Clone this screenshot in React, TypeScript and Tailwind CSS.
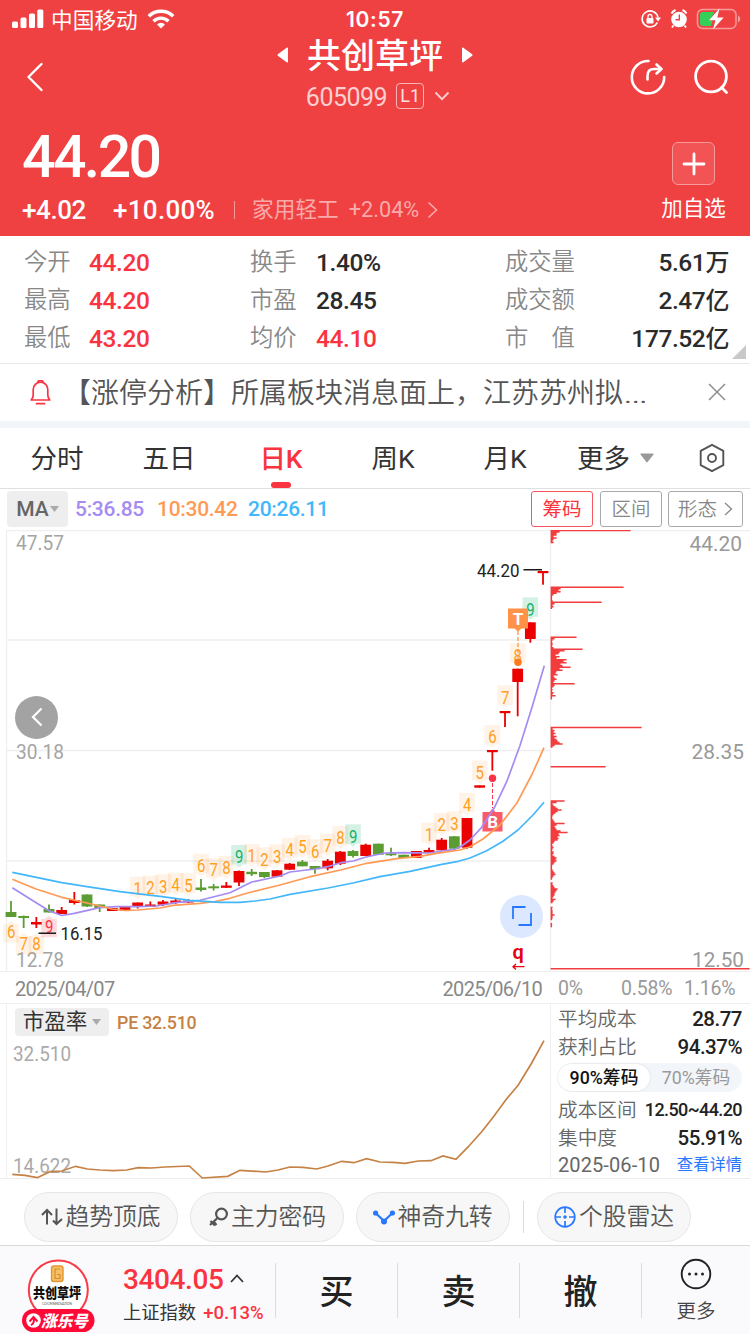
import { useState, type ReactNode } from 'react'
import clsx from 'clsx'

const RED = '#eb0000'
const GREEN = '#5c9d33'

type Candle = {
  high: number
  top: number
  bottom: number
  low: number
  up: boolean
}

function c(high: number, top: number, bottom: number, low: number, up: boolean): Candle {
  return { high, top, bottom, low, up }
}

const candles: Candle[] = [
  c(901, 912, 917, 917, false),
  c(915.5, 916, 918, 928, false),
  c(917, 922, 924.5, 928, true),
  c(904.5, 909, 912.5, 912.5, false),
  c(907, 910, 914, 914, true),
  c(892, 900, 903, 904.5, true),
  c(894.5, 894.5, 906.5, 907, false),
  c(904.5, 904.5, 908, 912, false),
  c(908, 908, 911, 911, true),
  c(907, 907, 910.5, 910.5, true),
  c(902.5, 902.5, 907, 908.5, true),
  c(901.5, 904.5, 907, 907, true),
  c(900, 901.5, 904.7, 906, true),
  c(898.5, 900.5, 902.8, 904, true),
  c(899, 900.5, 902.5, 903, true),
  c(879, 887.5, 890, 891.5, false),
  c(884, 886.3, 888.3, 890.5, false),
  c(882, 885.5, 887.8, 888, true),
  c(870.5, 871, 882.5, 886, true),
  c(869, 871.8, 874.2, 876, false),
  c(872, 872, 877, 878, false),
  c(870, 870.3, 876.7, 876.7, true),
  c(863, 863.7, 869.7, 870, true),
  c(860, 861.7, 866.3, 866.3, false),
  c(866, 866, 869.3, 873.7, false),
  c(859, 860.7, 868.3, 870.3, true),
  c(851, 851.7, 863.7, 865, true),
  c(850, 851, 856, 857.5, false),
  c(843.7, 844.7, 856, 856, true),
  c(843.7, 843.7, 854.7, 854.7, false),
  c(847.7, 853.3, 855.3, 856, false),
  c(854.7, 854.7, 858, 858, false),
  c(851, 851, 858, 858, true),
  c(847.7, 850, 852.7, 852.7, true),
  c(838, 839.7, 850.3, 850.3, true),
  c(836, 836.3, 848.7, 848.7, false),
  c(818, 818, 847.7, 848.7, true),
  c(785.3, 785.3, 787.7, 787.7, true),
  c(750, 750, 752.2, 770.7, true),
  c(711, 711, 713.2, 727, true),
  c(668.7, 668.7, 682, 716.3, true),
  c(622.3, 622.3, 639, 642.7, true),
  c(571, 571, 573.2, 584.7, true),
]

// [candle index, digit, centre y]
const turnAbove: [number, number, number][] = [
  [10, 1, 888.7], [11, 2, 887.7], [12, 3, 886.3], [13, 4, 884.7], [14, 5, 885.3],
  [15, 6, 865.7], [16, 7, 870], [17, 8, 868], [18, 9, 857], [19, 1, 856],
  [20, 2, 859.3], [21, 3, 856.3], [22, 4, 850], [23, 5, 847], [24, 6, 851.3],
  [25, 7, 845.7], [26, 8, 838], [27, 9, 836.3], [33, 1, 834.7], [34, 2, 825],
  [35, 3, 823.3], [36, 4, 805], [37, 5, 772.7], [38, 6, 737], [39, 7, 697.3],
  [40, 8, 655.3], [41, 9, 609.3],
]

const turnBelow: [number, number, number][] = [
  [0, 6, 932], [1, 7, 944], [2, 8, 944], [3, 9, 926.7],
]

const ma5 =
  '12.3,887.7 25,895.7 49,910.7 61.7,915.5 74.3,913.3 99.7,907.7 116.7,906.7 137.7,906.7 156.7,906 175.7,902.7 200,900.3 230,892.7 251.7,882 280,876 290,872 315,869 327.7,866.7 340.7,862.7 353.3,861 366,857 385,853 403,852.7 430,853 442,851 454.7,849.3 461.7,846 470,840 481.7,827.3 494,808.3 506.7,781.7 520,745.5 531.7,708.3 544.3,665.7'
const ma10 =
  '12.3,879.3 36,889 61.7,897.3 87,903 99.7,906 112,909 125,910.5 137.7,910 160,908 173,905.3 200,903.3 215,901.5 230,898.3 246.7,893.3 280,885 290,882.3 310,876.7 340.7,870 366.7,863.3 396.7,858.7 420,856.3 436.7,853.3 460,850 470,846.7 483,839 500,825 516.7,803.3 531.7,775 544,747.7'
const ma20 =
  '12.3,872.3 61.7,882.7 87,886.7 120,891.7 160,896.3 190,900.3 220,902.3 240,902.3 255,901 270,899 290,894.3 328,888 353,883 380,876.7 410,871.3 441.7,864.3 458.3,861.3 470,858 486.7,850.7 503,841.3 518,830 533,815 544,802.3'
const pe =
  '12.3,1174.3 25,1175.3 37.3,1177.7 50,1171.7 61.7,1171 75.7,1166.3 87.3,1169 100,1170 113.3,1170.7 126.7,1170 138.3,1167.7 151.7,1168 165,1167 189.3,1166 202.3,1178 227.7,1176.3 240,1170.3 265.7,1172 278,1170 290,1167 303,1167.3 316.7,1169 328,1166 341.7,1161.3 354,1162.7 366.7,1158.7 380,1162 393,1162.3 405,1163.3 418.3,1161 431,1160.7 443,1156 456,1159.3 468.3,1146.7 481.7,1131.7 493.3,1117 506.3,1099.3 518.3,1085 531.7,1063 544,1040.7'

// chip distribution: start y and one bar length per 1.5px
const chipGroups: [number, number[]][] = [
  [530.5, [80, 9, 6, 6, 3, 6, 3, 2, 3]],
  [587.2, [73, 10, 8, 10, 6, 3, 1.5, 1.5, 1.5, 2, 51, 4, 2, 3, 1.5]],
  [637.3, [26, 4, 2, 1.5, 2, 2, 1.5, 3, 32, 14, 9, 8, 5, 9, 6, 16, 13, 16, 10, 12, 20, 9, 12, 6, 5, 7, 3, 4, 6, 4, 3, 24, 4, 3, 1.5, 2, 1.5, 3, 2, 5, 1.5, 1.5]],
  [727.5, [91, 2, 4, 3, 5, 3, 6, 4, 6, 7, 9, 12, 4, 2]],
  [766.6, [55]],
  [801, [14, 6, 2, 3, 5, 7, 11, 7, 5, 3, 2, 1.5, 2, 3, 4, 14, 6, 4, 5, 6, 10, 17, 8, 9, 7, 8, 7, 4, 3, 1.5, 2, 3, 2, 1.5, 3, 3, 2, 4, 6, 5, 6, 4, 3, 1.5, 1.5, 1.5, 2, 3, 4, 5, 3, 2, 1.5]],
  [883, [2, 2, 3, 4, 7, 6, 5, 4, 4, 3, 2, 5, 3, 2]],
  [907.5, [2, 1.5, 2, 2, 2, 4, 2, 2, 1.5]],
  [923.5, [1.5, 1.5, 1.5]],
  [968.8, [199]],
]

const CHIP_X = 550.6

function chipPath(y0: number, bars: number[]) {
  const steps = bars.map((len) => `H${CHIP_X + len}v1.5`).join('')
  return `M${CHIP_X} ${y0 - 0.7}${steps}H${CHIP_X}z`
}

const candleX = (i: number) => 11 + i * 12.667

function Label({
  x,
  y,
  w,
  size = 20,
  fill = '#999',
  children,
}: {
  x: number
  y: number
  w: number
  size?: number
  fill?: string
  children: string
}) {
  return (
    <text x={x} y={y} fontSize={size} fill={fill} textLength={w} lengthAdjust="spacingAndGlyphs">
      {children}
    </text>
  )
}

function TurnMark({ x, y, n, below = false }: { x: number; y: number; n: number; below?: boolean }) {
  const nine = n === 9
  const fg = nine ? (below ? '#ff3344' : '#16b06b') : '#ff9f1e'
  const bg = nine ? (below ? '#ff3344' : '#16b06b') : '#ff9632'
  const top = below ? y - 8 : y - 12
  const h = below ? 18.5 : 19.5
  const tip = below ? `M${x - 4} ${top}l4 -3 4 3z` : `M${x - 4} ${top + h}l4 3 4 -3z`
  return (
    <g>
      <rect x={x - 7.8} y={top} width={15.6} height={h} fill={bg} opacity={nine ? 0.18 : 0.12} />
      <path d={tip} fill={bg} opacity={nine ? 0.18 : 0.12} />
      <text x={x - 4.1} y={y + 6.3} fontSize={17.5} fill={fg} textLength={8.4} lengthAdjust="spacingAndGlyphs">
        {n}
      </text>
    </g>
  )
}

function MainChart() {
  return (
    <svg width="750" height="441" viewBox="0 530 750 441" className="block">
      <g stroke="#efefef" strokeWidth="1.3">
        <path d="M6.5 530.5H750M6.5 640H550M6.5 750.5H550M6.5 861H550" />
        <path d="M6.5 530V971M550.5 530V971" />
      </g>
      <g fill="#f23c3e">
        {chipGroups.map(([y0, bars]) => <path key={y0} d={chipPath(y0, bars)} />)}
      </g>
      <Label x={16} y={550} w={48} fill="#a5a5a5">47.57</Label>
      <Label x={16} y={758.5} w={48} fill="#a5a5a5">30.18</Label>
      <Label x={16} y={966.5} w={48} fill="#a5a5a5">12.78</Label>
      <Label x={689.5} y={551} w={52.5} size={21}>44.20</Label>
      <Label x={691.5} y={759} w={52.5} size={21}>28.35</Label>
      <Label x={692} y={967} w={52} size={21}>12.50</Label>

      {turnAbove.map(([i, n, y]) => <TurnMark key={i} x={candleX(i)} y={y} n={n} />)}
      {turnBelow.map(([i, n, y]) => <TurnMark key={i} x={candleX(i)} y={y} n={n} below />)}
      {candles.map((k, i) => {
        const x = candleX(i)
        return (
          <g key={i} fill={k.up ? RED : GREEN}>
            <rect x={x - 0.9} y={k.high} width={1.8} height={k.low - k.high} />
            <rect x={x - 5.4} y={k.top} width={10.8} height={k.bottom - k.top} />
          </g>
        )
      })}

      {/* buy / sell markers */}
      <path d="M492.500 783v25" stroke="#fa3246" strokeWidth="1" strokeDasharray="4 2" />
      <circle cx="492.500" cy="778.300" r="3.700" fill="#fa3246" />
      <path d="M482.500 812h7l3-3.500 3 3.500h7v19.500h-20z" fill="#fb5a69" />
      <text x="492.700" y="828" fontSize="17" fontWeight="700" fill="#fff" textAnchor="middle">B</text>
      <path d="M518 631v27" stroke="#ff9544" strokeWidth="1.300" strokeDasharray="4 2" />
      <circle cx="518" cy="662.300" r="3.700" fill="#ff7a1e" />
      <path d="M508 608.500h20v20h-6.500l-3.500 3-3.500-3H508z" fill="#ff9248" />
      <text x="518" y="625" fontSize="17" fontWeight="700" fill="#fff" textAnchor="middle">T</text>

      <g fill="none" strokeWidth="1.700" strokeLinejoin="round">
        <polyline points={ma5} stroke="#a58bf2" />
        <polyline points={ma10} stroke="#ff9a55" />
        <polyline points={ma20} stroke="#42b7fb" />
      </g>

      <path d="M523.500 569.700H542M38.500 933.300H56" stroke="#1a1a1a" strokeWidth="1.600" />
      <Label x={477} y={576.5} w={42.5} size={17.5} fill="#222">44.20</Label>
      <Label x={60.5} y={940} w={42} size={17.5} fill="#222">16.15</Label>

      <text x="518.200" y="958.500" fontSize="20" fontWeight="600" fill="#e60012" textAnchor="middle">q</text>
      <path d="M513 966.700h11.500M516 964l-3 2.700 3 2.700" fill="none" stroke="#e60012" strokeWidth="1.300" />
    </svg>
  )
}

function StatusBar() {
  return (
    <div className="grid h-[38px] grid-cols-3 items-center">
      <div className="flex items-center pl-3">
        <svg width="32" height="20" viewBox="0 0 32 20" fill="#fff">
          <rect x="0" y="12.500" width="6" height="6.500" rx="1.500" />
          <rect x="8.500" y="8.500" width="6" height="10.500" rx="1.500" />
          <rect x="17" y="4.500" width="6" height="14.500" rx="1.500" />
          <rect x="25.300" y="0.500" width="6" height="18.500" rx="1.500" />
        </svg>
        <span className="ml-[7px] pt-[3px] text-[21.700px] leading-none">中国移动</span>
        <svg className="ml-[9px]" width="28" height="20" viewBox="0 0 28 20">
          <path d="M1.800 7.200a17.500 17.500 0 0 1 24.400 0" fill="none" stroke="#fff" strokeWidth="3.600" />
          <path d="M6.500 12.200a10.600 10.600 0 0 1 15 0" fill="none" stroke="#fff" strokeWidth="3.400" />
          <path d="M14 19.500l-4-4.100a5.800 5.800 0 0 1 8 0z" fill="#fff" />
        </svg>
      </div>
      <div className="pt-px text-center font-['Inter',sans-serif] text-[21px] font-semibold leading-none tracking-[0.7px]">10:57</div>
      <div className="flex items-center justify-end gap-2 pr-[9px]">
        <svg width="22" height="20" viewBox="0 0 22 20">
          <path d="M17.300 13.500a8 8 0 1 1 .700-5" fill="none" stroke="#fff" strokeWidth="1.600" />
          <path d="M15 8.500h6l-3 4z" fill="#fff" />
          <rect x="6.500" y="9" width="7" height="5.500" rx=".8" fill="#fff" />
          <path d="M8 9.500V7.500a2 2 0 0 1 4 0v2" fill="none" stroke="#fff" strokeWidth="1.300" />
        </svg>
        <svg width="18" height="20" viewBox="0 0 18 20">
          <circle cx="9" cy="10.500" r="7.800" fill="#fff" />
          <path d="M1.500 4.500a8 8 0 0 1 4-3.500M12.500 1a8 8 0 0 1 4 3.500M3.500 16.500L2 18.500M14.500 16.500l1.500 2" stroke="#fff" strokeWidth="1.900" fill="none" />
          <path d="M9.300 5.500v5.200H5.500" stroke="#f04142" strokeWidth="1.400" fill="none" />
        </svg>
        <svg width="45" height="22" viewBox="0 0 45 22">
          <rect x="1.500" y="1.500" width="38.500" height="19" rx="5" fill="none" stroke="#f79a9b" strokeWidth="1.500" />
          <path d="M42 7.500v7c3-1.500 3-5.500 0-7z" fill="#f79a9b" />
          <path d="M7 4h11.500l-5 8.500h3l-1.500 5.500H7a3 3 0 0 1-3-3V7a3 3 0 0 1 3-3z" fill="#34d058" />
          <path d="M23.500.5L13 12.200h6.500L17 21.500l10.700-12h-6.400z" fill="#fff" />
        </svg>
      </div>
    </div>
  )
}

function Header() {
  return (
    <header className="flex h-[236px] flex-col bg-[#f04142] text-white">
      <StatusBar />
      <div className="grid h-[80px] grid-cols-3">
        <div className="flex items-center pb-[2px] pl-[26px]">
          <svg width="18" height="30" viewBox="0 0 18 30" fill="none" stroke="#fff" strokeWidth="2.400" strokeLinecap="round" strokeLinejoin="round">
            <path d="M15.500 2L2.500 15l13 13" />
          </svg>
        </div>
        <div className="flex flex-col items-center">
          <div className="flex h-[34px] items-center">
            <svg width="12" height="16" viewBox="0 0 12 16" fill="#fff">
              <path d="M11 1.200v13.600a.8.8 0 0 1-1.300.5L.8 8.700a1 1 0 0 1 0-1.400L9.700.7a.8.8 0 0 1 1.300.5z" />
            </svg>
            <span className="mx-[18px] whitespace-nowrap pt-px text-[34px] font-medium leading-none">共创草坪</span>
            <svg width="12" height="16" viewBox="0 0 12 16" fill="#fff">
              <path d="M1 1.200v13.600a.8.8 0 0 0 1.300.5l8.900-6.600a1 1 0 0 0 0-1.400L2.300.7A.8.8 0 0 0 1 1.200z" />
            </svg>
          </div>
          <div className="ml-[6px] mt-[10px] flex h-[28px] items-center">
            <span className="pt-[3px] text-[25px] leading-none tracking-[-0.5px] text-[#fbcfcf]">605099</span>
            <span className="ml-[9px] flex h-[26px] w-[28px] items-center justify-center rounded-[4px] border border-[#f9b5b5] text-[18px] leading-none text-[#fde0e0]">
              L1
            </span>
            <svg className="ml-[10px]" width="16" height="10" viewBox="0 0 16 10" fill="none" stroke="#fbd0d0" strokeWidth="1.800">
              <path d="M1.500 1.500L8 8.200l6.500-6.700" />
            </svg>
          </div>
        </div>
        <div className="flex items-center justify-end gap-[27px] pb-[2px] pr-[21px]">
          <svg width="36" height="36" viewBox="0 0 36 36" fill="none" stroke="#fff" strokeWidth="2.600" strokeLinecap="round" strokeLinejoin="round">
            <path d="M18.500 2A16.200 16.200 0 1 0 34.200 18" />
            <path d="M17.500 20.500v-3.500c0-4.500 2.500-7 6.500-7h7" />
            <path d="M26.500 5.500l5 4.500-5 4.500" />
          </svg>
          <svg width="36" height="36" viewBox="0 0 36 36" fill="none" stroke="#fff" strokeWidth="2.800" strokeLinecap="round">
            <circle cx="18" cy="17.500" r="15.400" />
            <path d="M28.500 28.500l5 5" />
          </svg>
        </div>
      </div>
      <div className="flex h-[118px] justify-between pl-[22px] pr-[23px]">
        <div>
          <div className="mt-[10px] h-[58px] text-[59px] font-medium leading-[58px] tracking-[-2.600px]">44.20</div>
          <div className="mt-[9px] flex h-[30px] items-center text-[26px] font-medium leading-none">
            <span className="w-[91px] tracking-[-0.4px]">+4.02</span>
            <span className="w-[121px] tracking-[0.3px]">+10.00%</span>
            <span className="h-[18px] w-px bg-[#f79a9a]" />
            <span className="ml-[17px] text-[21.700px] font-normal text-[#f9a9a9]">家用轻工</span>
            <span className="ml-[10px] text-[21.700px] font-normal text-[#f9a9a9]">+2.04%</span>
            <svg className="ml-[8px]" width="11" height="18" viewBox="0 0 11 18" fill="none" stroke="#f9a9a9" strokeWidth="1.600">
              <path d="M1.500 1.500L9.500 9l-8 7.500" />
            </svg>
          </div>
        </div>
        <div className="flex w-[67px] flex-col items-center pt-[24px]">
          <button className="flex h-[43px] w-[43px] items-center justify-center rounded-[6px] border border-[#f79a9a] bg-[#f25455]">
            <svg width="24" height="24" viewBox="0 0 24 24" stroke="#fff" strokeWidth="2.800" strokeLinecap="round">
              <path d="M12 2v20M2 12h20" />
            </svg>
          </button>
          <span className="mt-[12px] whitespace-nowrap text-[21.500px] leading-[24px]">加自选</span>
        </div>
      </div>
    </header>
  )
}

const quotes = [
  ['今开', '44.20', true, '换手', '1.40%', false, '成交量', '5.61', '万'],
  ['最高', '44.20', true, '市盈', '28.45', false, '成交额', '2.47', '亿'],
  ['最低', '43.20', true, '均价', '44.10', true, '市　值', '177.52', '亿'],
] as const

function Quotes() {
  const label = 'pt-[3px] font-[350]'
  const val = 'pt-[4px] text-[24.500px] font-medium tracking-[-0.4px]'
  return (
    <section className="relative h-[128px] border-b border-[#e8e8e8] pt-[6px]">
      {quotes.map(([a, av, ar, b, bv, br, t, tv, unit]) => (
        <div key={a} className="flex h-[38px] items-center pl-[24px] pr-[21px] text-[23.300px] leading-none text-[#888]">
          <span className={clsx(label, 'w-[65px]')}>{a}</span>
          <span className={clsx(val, 'w-[161px]', ar ? 'text-[#fa3340]' : 'text-[#2b2b2b]')}>{av}</span>
          <span className={clsx(label, 'w-[66px]')}>{b}</span>
          <span className={clsx(val, 'w-[189px]', br ? 'text-[#fa3340]' : 'text-[#2b2b2b]')}>{bv}</span>
          <span className={label}>{t}</span>
          <span className={clsx(val, 'ml-auto whitespace-nowrap text-[#2b2b2b]')}>
            {tv}
            <span className="text-[24px]">{unit}</span>
          </span>
        </div>
      ))}
      <svg className="absolute bottom-[4px] right-[4px]" width="14" height="14" viewBox="0 0 14 14" fill="#c9c9c9">
        <path d="M14 0v14H0z" />
      </svg>
    </section>
  )
}

function Notice() {
  return (
    <section className="flex h-[57px] items-center">
      <svg className="ml-[30px]" width="21" height="25" viewBox="0 0 21 25" fill="none" stroke="#fa3340" strokeWidth="1.700" strokeLinejoin="round" strokeLinecap="round">
        <path d="M7.800 2.300a2.800 2.800 0 0 1 5.400 0M1.200 20c1.500-1.500 2-3 2-5V9.500a7.300 7.300 0 0 1 14.600 0V15c0 2 .5 3.500 2 5zM6.500 23.700h8" />
      </svg>
      <span className="ml-[12px] w-[600px] whitespace-nowrap pt-[4px] text-[28px] font-[350] leading-none text-[#555]">
        【涨停分析】所属板块消息面上，江苏苏州拟
        <span className="inline-block origin-left scale-x-[1.4]">…</span>
      </span>
      <svg className="ml-[45px]" width="18" height="18" viewBox="0 0 18 18" stroke="#888" strokeWidth="1.400">
        <path d="M1 1l16 16M17 1L1 17" />
      </svg>
    </section>
  )
}

function PeriodTabs() {
  const [active, setActive] = useState('日K')
  return (
    <nav className="flex h-[61px] items-center border-b border-[#e0e0e0] pl-px text-[26.500px] leading-none text-[#333]">
      {['分时', '五日', '日K', '周K', '月K'].map((t) => (
        <button
          key={t}
          onClick={() => setActive(t)}
          className={clsx('relative flex h-full w-[112px] items-center justify-center pt-[3px]', t === active && 'font-medium text-[#fa3340]')}
        >
          {t}
          {t === active && <span className="absolute bottom-0 h-[6px] w-[20px] rounded-full bg-[#fa3340]" />}
        </button>
      ))}
      <button className="ml-[16px] flex items-center">
        <span className="pt-[3px]">更多</span>
        <svg className="ml-[10px]" width="14" height="10" viewBox="0 0 14 10" fill="#999">
          <path d="M1 .5h12a.6.600 0 0 1 .5 1L7.600 9a.8.800 0 0 1-1.200 0L.5 1.500a.6.600 0 0 1 .5-1z" />
        </svg>
      </button>
      <svg className="ml-[44px]" width="28" height="30" viewBox="0 0 28 30" fill="none" stroke="#555" strokeWidth="1.900" strokeLinejoin="round">
        <path d="M14 1.800l11.300 6v14.400L14 28.200 2.700 22.200V7.800z" />
        <circle cx="14" cy="15" r="4" />
      </svg>
    </nav>
  )
}

function Toolbar() {
  return (
    <div className="flex h-[41px] items-center pl-[7px] pr-[7px] text-[21px] leading-none">
      <button className="flex h-[36px] w-[61px] items-center justify-center gap-px rounded-[4px] bg-[#eeeeee] font-medium text-[#666]">
        MA
        <svg width="9" height="6" viewBox="0 0 9 6" fill="#aaa"><path d="M0 0h9L4.500 6z" /></svg>
      </button>
      <span className="ml-[7px] w-[82px] pt-px font-medium tracking-[-0.3px] text-[#a58bf2]">5:36.85</span>
      <span className="w-[91px] pt-px font-medium tracking-[-0.3px] text-[#ff9a55]">10:30.42</span>
      <span className="pt-px font-medium tracking-[-0.3px] text-[#42b7fb]">20:26.11</span>
      <div className="ml-auto flex text-[19.500px]">
        <button className="flex h-[36px] w-[62px] items-center justify-center rounded-[3px] border border-[#fa5560] pt-[2px] text-[#fa3340]">筹码</button>
        <button className="ml-[7px] flex h-[36px] w-[62px] items-center justify-center rounded-[3px] border border-[#aaa] pt-[2px] font-[350] text-[#888]">区间</button>
        <button className="ml-[6px] flex h-[36px] w-[75px] items-center justify-center gap-[7px] rounded-[3px] border border-[#aaa] font-[350] text-[#888]">
          <span className="pt-[2px]">形态</span>
          <svg width="9" height="14" viewBox="0 0 9 14" fill="none" stroke="#888" strokeWidth="1.300">
            <path d="M1 1l6.500 6L1 13" />
          </svg>
        </button>
      </div>
    </div>
  )
}

function StatRow({ label, value, small = false }: { label: string; value: string; small?: boolean }) {
  return (
    <div className="flex h-[28px] items-center justify-between text-[19.700px] leading-none text-[#666]">
      <span className="pt-[2px] font-[350]">{label}</span>
      <span className={clsx('pt-px font-medium text-[#222]', small ? 'text-[18px] tracking-[-0.6px]' : 'text-[20.500px] tracking-[-0.5px]')}>
        {value}
      </span>
    </div>
  )
}

function ChipStats() {
  const [range, setRange] = useState('90%')
  return (
    <aside className="flex-1 border-l border-[#efefef] pl-[7px] pr-[8px] pt-px">
      <StatRow label="平均成本" value="28.77" />
      <StatRow label="获利占比" value="94.37%" />
      <div className="mb-[4px] mt-[2px] flex h-[29px] items-center rounded-full bg-[#f2f5f9] text-[17.800px] leading-none">
        {['90%', '70%'].map((r) => (
          <button
            key={r}
            onClick={() => setRange(r)}
            className={clsx(
              'flex h-[27px] w-[92px] items-center justify-center rounded-full pt-px',
              r === range ? 'bg-white font-medium text-[#111] shadow-[0_0_2px_rgba(0,0,0,0.15)]' : 'text-[#999]',
            )}
          >
            {r}筹码
          </button>
        ))}
      </div>
      <StatRow label="成本区间" value="12.50~44.20" small />
      <StatRow label="集中度" value="55.91%" />
      <div className="flex h-[26px] items-center justify-between text-[20px] leading-none text-[#666]">
        <span className="tracking-[0.1px]">2025-06-10</span>
        <span className="pt-[2px] text-[16.300px] text-[#2878ff]">查看详情</span>
      </div>
    </aside>
  )
}

function Chart() {
  return (
    <section className="relative">
      <MainChart />
      <button className="absolute left-[15px] top-[166px] flex h-[43px] w-[43px] items-center justify-center rounded-full bg-[#a3a3a3]">
        <svg width="12" height="20" viewBox="0 0 12 20" fill="none" stroke="#fff" strokeWidth="2.200">
          <path d="M10.500 1.500L2 10l8.500 8.500" />
        </svg>
      </button>
      <button className="absolute left-[500px] top-[365px] flex h-[43px] w-[43px] items-center justify-center rounded-full bg-[#dce8ff]">
        <svg width="20" height="20" viewBox="0 0 20 20" fill="none" stroke="#2878ff" strokeWidth="1.800">
          <path d="M1 13V1h12.500M19 7v12H6.500" />
        </svg>
      </button>
      <div className="flex h-[33px] items-center border-y border-[#efefef] pt-[3px] text-[20px] leading-none text-[#888]">
        <span className="ml-[15px] tracking-[-0.700px]">2025/04/07</span>
        <span className="ml-auto mr-[9px] tracking-[-0.700px]">2025/06/10</span>
        <div className="flex h-full w-[199px] items-center text-[19.500px] tracking-[-0.2px] text-[#999]">
          <span className="ml-[7px] w-[63px]">0%</span>
          <span className="w-[63px]">0.58%</span>
          <span>1.16%</span>
        </div>
      </div>
    </section>
  )
}

function PePanel() {
  return (
    <section className="flex h-[176px] border-b border-[#f0eaea]">
      <div className="relative w-[550px] shrink-0">
        <svg width="550" height="175" viewBox="0 1004 550 175" className="absolute left-0 top-0">
          <path d="M6.500 1004v175" stroke="#efefef" />
          <Label x={13} y={1061} w={58} size={19.5} fill="#aaa">32.510</Label>
          <Label x={13} y={1173} w={58} size={19.5} fill="#aaa">14.622</Label>
          <polyline points={pe} fill="none" stroke="#c68144" strokeWidth="1.700" />
        </svg>
        <div className="relative flex items-center pl-[15px] pt-[4px] leading-none">
          <button className="flex h-[28px] w-[94px] items-center justify-center gap-[5px] rounded-[4px] bg-[#eeeeee] text-[21.500px] leading-none text-[#333]">
            <span className="pt-px">市盈率</span>
            <svg width="9" height="6" viewBox="0 0 9 6" fill="#aaa"><path d="M0 0h9L4.500 6z" /></svg>
          </button>
          <span className="ml-[8px] pt-[3px] text-[17.800px] font-medium tracking-[-0.2px] text-[#c68144]">PE 32.510</span>
        </div>
      </div>
      <ChipStats />
    </section>
  )
}

function Pill({ icon, children }: { icon: ReactNode; children: ReactNode }) {
  return (
    <button className="flex h-[50px] w-[154px] shrink-0 items-center justify-center rounded-full border border-[#e6e6e6] bg-[#f7f7f7] text-[23.800px] font-[350] leading-none text-[#555]">
      {icon}
      <span className="pt-[3px]">{children}</span>
    </button>
  )
}

function Shortcuts() {
  return (
    <section className="flex h-[66px] items-center pl-[24px] pt-[9px]">
      <Pill
        icon={
          <svg className="mr-[2px]" width="22" height="20" viewBox="0 0 22 20" fill="none" stroke="#555" strokeWidth="2">
            <path d="M6 17.500V3M1 8l5-5 5 5M15.500 1.500V17M21 12l-5.500 5-3.500-3.500" />
          </svg>
        }
      >
        趋势顶底
      </Pill>
      <span className="w-[12px] shrink-0" />
      <Pill
        icon={
          <svg className="mr-[2px]" width="21" height="20" viewBox="0 0 21 20" fill="none" stroke="#555" strokeWidth="2.200">
            <circle cx="13.500" cy="7" r="5.400" />
            <path d="M9.500 11L2 18M5.500 14.500l3 3.500M2.500 14l4.500 4.500" />
          </svg>
        }
      >
        主力密码
      </Pill>
      <span className="w-[12px] shrink-0" />
      <Pill
        icon={
          <svg className="mr-[2px]" width="22" height="16" viewBox="0 0 22 16" fill="#2878ff">
            <path d="M2.500 4l8.500 8 8.500-8" fill="none" stroke="#2878ff" strokeWidth="2.200" />
            <circle cx="2.600" cy="4" r="2.600" />
            <circle cx="11" cy="12.500" r="3" />
            <circle cx="19.400" cy="4" r="2.600" />
          </svg>
        }
      >
        神奇九转
      </Pill>
      <span className="ml-[13px] mr-[13px] h-[32px] w-px shrink-0 bg-[#dcdcdc]" />
      <Pill
        icon={
          <svg className="mr-[3px]" width="22" height="22" viewBox="0 0 22 22" fill="none" stroke="#2878ff" strokeWidth="1.700">
            <circle cx="11" cy="11" r="9.800" />
            <path d="M11 1v6M11 15v6M1 11h6M15 11h6" />
            <circle cx="11" cy="11" r="1.800" fill="#2878ff" stroke="none" />
          </svg>
        }
      >
        个股雷达
      </Pill>
    </section>
  )
}

function StockBadge() {
  return (
    <svg width="76" height="76" viewBox="20 1257 76 76" className="ml-[20px] mt-[10px] shrink-0">
      <circle cx="58.300" cy="1290" r="29.500" fill="#fff" stroke="#f93a47" strokeWidth="2" />
      <rect x="51.500" y="1266" width="11.500" height="15.500" rx="2.500" fill="#f6c069" stroke="#e2962f" strokeWidth="1.400" />
      <path d="M60 1269h-5v9.500h5v-4h-3" fill="none" stroke="#d98a20" strokeWidth="1.200" />
      <text x="33" y="1297.500" fontSize="14" fontWeight="900" fill="#111" textLength="48" lengthAdjust="spacingAndGlyphs">
        共创草坪
      </text>
      <text x="42" y="1304.500" fontSize="4" fill="#666" textLength="30">CO-CR INNOVATION</text>
      <rect x="22" y="1309" width="72.500" height="23" rx="11.500" fill="#ff0a37" />
      <circle cx="33.500" cy="1320.500" r="7.300" fill="#fff" />
      <path d="M29.500 1321.500l4-4.500 4 4.500M34 1317.500c0 4 0 6-3 7.500" fill="none" stroke="#ff0a37" strokeWidth="2" />
      <text x="41" y="1326.500" fontSize="16" fontWeight="900" fontStyle="italic" fill="#fff" textLength="47" lengthAdjust="spacingAndGlyphs">
        涨乐号
      </text>
    </svg>
  )
}

function TradeBar() {
  return (
    <footer className="flex h-[89px] items-center border-t border-[#d9d9d9] bg-[#fafafc]">
      <StockBadge />
      <div className="ml-[27px] w-[152px] shrink-0 pt-[10px]">
        <div className="flex h-[36px] items-center text-[28px] leading-none tracking-[-0.4px] text-[#fa3340]">
          <span className="font-medium">3404.05</span>
          <svg className="mb-[4px] ml-[7px]" width="14" height="9" viewBox="0 0 14 9" fill="none" stroke="#333" strokeWidth="1.800">
            <path d="M1 8l6-6.500L13 8" />
          </svg>
        </div>
        <div className="flex h-[30px] items-center whitespace-nowrap pt-px text-[18.300px] leading-none text-[#333]">
          上证指数
          <span className="ml-[7px] text-[18.500px] font-medium text-[#fa3340]">+0.13%</span>
        </div>
      </div>
      {['买', '卖', '撤'].map((t) => (
        <button key={t} className="flex h-[55px] w-[122px] shrink-0 items-center justify-center border-l border-[#dcdcdc] pt-[3px] text-[34px] font-medium leading-none text-[#222]">
          {t}
        </button>
      ))}
      <button className="flex h-[55px] flex-1 flex-col items-center justify-center border-l border-[#dcdcdc] text-[19.500px] font-[350] leading-none text-[#444]">
        <svg className="shrink-0" width="32" height="32" viewBox="0 0 32 32" fill="#222">
          <circle cx="16" cy="16" r="14.300" fill="none" stroke="#222" strokeWidth="1.900" />
          <circle cx="9.500" cy="16" r="1.500" />
          <circle cx="16" cy="16" r="1.500" />
          <circle cx="22.500" cy="16" r="1.500" />
        </svg>
        <span className="mt-[12px]">更多</span>
      </button>
    </footer>
  )
}

export default function App() {
  return (
    <div className="flex h-[1334px] w-[750px] flex-col overflow-hidden bg-white font-['Roboto','Noto_Sans_CJK_SC',sans-serif]">
      <Header />
      <Quotes />
      <Notice />
      <div className="h-[7px] bg-[#f2f5f9]" />
      <PeriodTabs />
      <Toolbar />
      <Chart />
      <PePanel />
      <Shortcuts />
      <TradeBar />
    </div>
  )
}
